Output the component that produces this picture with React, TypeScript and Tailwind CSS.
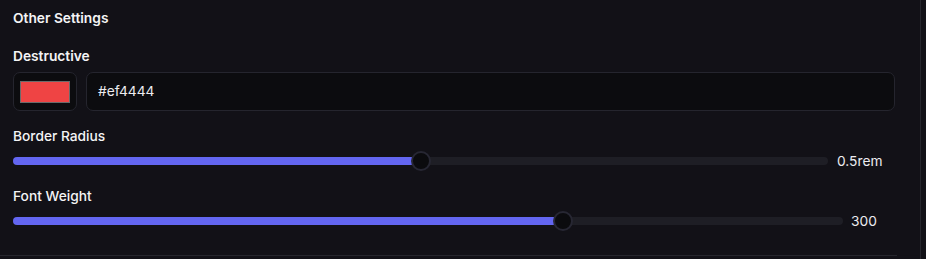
import React from "react";

interface SliderRowProps {
  label: string;
  value: string;
  trackWidth: number;
  thumbCenter: number;
  gapClass: string;
}

function SliderRow({ label, value, trackWidth, thumbCenter, gapClass }: SliderRowProps) {
  return (
    <div>
      <div className="mt-[16px] text-[13.75px] leading-[18px] font-medium text-[#f4f4f5]">{label}</div>
      <div className={`mt-[6px] flex h-[20px] items-center ${gapClass}`}>
        <div className="relative h-[20px] shrink-0" style={{ width: trackWidth }}>
          <div className="absolute left-0 right-0 top-[6px] h-[8px] rounded-full bg-[#1e1e25]" />
          <div
            className="absolute left-0 top-[6px] h-[8px] rounded-full bg-[#6366f1]"
            style={{ width: thumbCenter }}
          />
          <div
            className="absolute top-0 h-[20px] w-[20px] rounded-full border-2 border-[#272733] bg-[#0b0b0e]"
            style={{ left: thumbCenter - 10 }}
          />
        </div>
        <span className="text-[13.75px] leading-[18px] text-[#ececf0]">{value}</span>
      </div>
    </div>
  );
}

export default function App() {
  return (
    <div
      className="flex h-[259px] w-[926px] overflow-hidden bg-[#121117]"
      style={{ fontFamily: "Inter, 'Liberation Sans', sans-serif" }}
    >
      <div className="h-full w-[921px] shrink-0 border-r border-[#26262d]">
        <div className="w-[897px] border-b border-[#26262d] pb-[24px] pl-[13px] pr-[2px] pt-[9px]">
          <div className="text-[13.75px] leading-[18px] font-semibold text-[#f4f4f5]">Other Settings</div>

          <div className="mt-[20px] text-[13.75px] leading-[18px] font-semibold text-[#f4f4f5]">Destructive</div>
          <div className="mt-[7px] flex h-[39px] gap-[9px]">
            <div className="flex w-[64px] shrink-0 items-center justify-center rounded-[7px] border border-[#25252e] bg-[#0c0c0f]">
              <div className="h-[22px] w-[50px] border border-[#6b6b6b] bg-[#ef4444]" />
            </div>
            <div className="flex flex-1 items-center rounded-[7px] border border-[#25252e] bg-[#0c0c0f] pl-[11px] text-[13.75px] text-[#ececf0]">
              #ef4444
            </div>
          </div>

          <SliderRow label="Border Radius" value="0.5rem" trackWidth={815} thumbCenter={408} gapClass="gap-[9px]" />
          <SliderRow label="Font Weight" value="300" trackWidth={830} thumbCenter={550} gapClass="gap-[8px]" />
        </div>
      </div>
      <div className="flex-1 bg-[#121117]" />
    </div>
  );
}
